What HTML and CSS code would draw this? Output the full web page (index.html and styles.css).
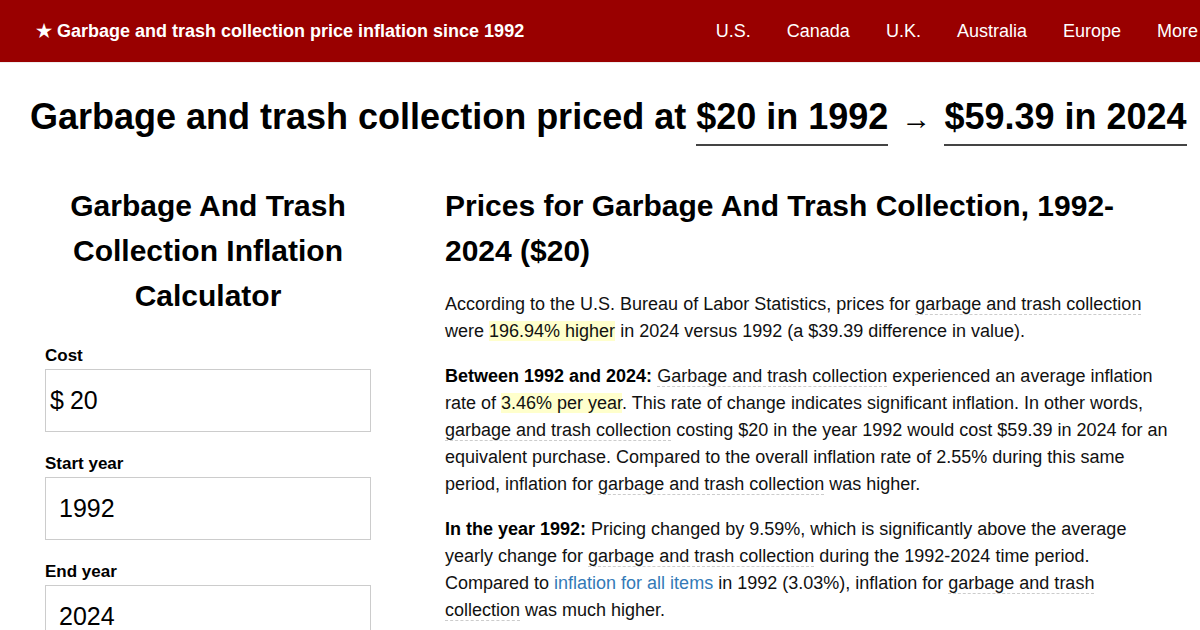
FILE: index.html
```html
<!DOCTYPE html>
<html>
<head>
<meta charset="utf-8">
<link rel="stylesheet" href="styles.css">
</head>
<body>
<header class="topbar">
  <div class="brand">★ Garbage and trash collection price inflation since 1992</div>
  <nav class="nav">
    <a>U.S.</a><a>Canada</a><a>U.K.</a><a>Australia</a><a>Europe</a><a>More</a>
  </nav>
</header>
<h1 class="headline">Garbage and trash collection priced at <span class="ul">$20 in 1992</span> <span class="arrow">→</span> <span class="ul">$59.39 in 2024</span></h1>
<main class="layout">
  <section class="calc">
    <h2 class="calc-title">Garbage And Trash Collection Inflation Calculator</h2>
    <label class="lbl">Cost</label>
    <div class="field"><span class="cur">$</span><span class="val">20</span></div>
    <label class="lbl">Start year</label>
    <div class="field"><span class="val pad">1992</span></div>
    <label class="lbl">End year</label>
    <div class="field"><span class="val pad">2024</span></div>
  </section>
  <section class="article">
    <h2 class="art-title">Prices for Garbage And Trash Collection, 1992-2024 ($20)</h2>
    <p>According to the U.S. Bureau of Labor Statistics, prices for <span class="dash">garbage and trash collection</span> were <span class="hl">196.94% higher</span> in 2024 versus 1992 (a $39.39 difference in value).</p>
    <p><b>Between 1992 and 2024:</b> <span class="dash">Garbage and trash collection</span> experienced an average inflation rate of <span class="hl">3.46% per year</span>. This rate of change indicates significant inflation. In other words, <span class="dash">garbage and trash collection</span> costing $20 in the year 1992 would cost $59.39 in 2024 for an equivalent purchase. Compared to the overall inflation rate of 2.55% during this same period, inflation for <span class="dash">garbage and trash collection</span> was higher.</p>
    <p><b>In the year 1992:</b> Pricing changed by 9.59%, which is significantly above the average yearly change for <span class="dash">garbage and trash collection</span> during the 1992-2024 time period. Compared to <a class="link">inflation for all items</a> in 1992 (3.03%), inflation for <span class="dash">garbage and trash collection</span> was much higher.</p>
  </section>
</main>
</body>
</html>
```

FILE: styles.css
```css
* { box-sizing: border-box; }
html, body { margin: 0; padding: 0; }
body {
  font-family: "Liberation Sans", Arial, sans-serif;
  color: #111;
  background: #fff;
  width: 1200px;
  height: 630px;
  overflow: hidden;
}
.topbar {
  background: #990000;
  height: 63px;
  border-bottom: 1px solid #eee;
  display: flex;
  align-items: center;
  justify-content: space-between;
  padding-left: 36px;
  white-space: nowrap;
}
.brand {
  color: #fff;
  font-weight: bold;
  font-size: 18px;
}
.nav {
  display: flex;
  gap: 36px;
  margin-right: 2px;
}
.nav a {
  color: #fff;
  font-size: 18px;
  text-decoration: none;
}
.headline {
  font-size: 36px;
  font-weight: bold;
  margin: 0;
  padding: 33px 0 0 30px;
  line-height: 42px;
  white-space: nowrap;
  color: #000;
}
.ul {
  display: inline-block;
  border-bottom: 2px solid #444;
  padding-bottom: 6px;
  line-height: 42px;
}
.arrow {
  font-size: 30px;
  font-weight: normal;
  margin: 0 3px;
}
.layout {
  display: grid;
  grid-template-columns: 326px 1fr;
  column-gap: 74px;
  padding: 37px 31px 0 45px;
}
.calc-title {
  font-size: 30px;
  line-height: 45px;
  text-align: center;
  margin: 0 0 28px;
  color: #000;
}
.lbl {
  display: block;
  font-weight: bold;
  font-size: 17px;
  color: #000;
  margin-bottom: 3px;
  line-height: 20px;
}
.field {
  height: 63px;
  border: 1px solid #ccc;
  display: flex;
  align-items: center;
  font-size: 25px;
  color: #000;
  margin-bottom: 22px;
  padding-left: 4px;
}
.cur { margin-right: 6px; }
.val.pad { padding-left: 9px; }
.art-title {
  font-size: 30px;
  line-height: 45px;
  margin: 0 0 18px;
  color: #000;
}
.article p {
  font-size: 18px;
  line-height: 27px;
  margin: 0 0 18px;
}
.article b { color: #000; }
.dash { border-bottom: 1px dashed #ccc; }
.hl { background: #ffffcc; }
.link { color: #337ab7; text-decoration: none; }
```
